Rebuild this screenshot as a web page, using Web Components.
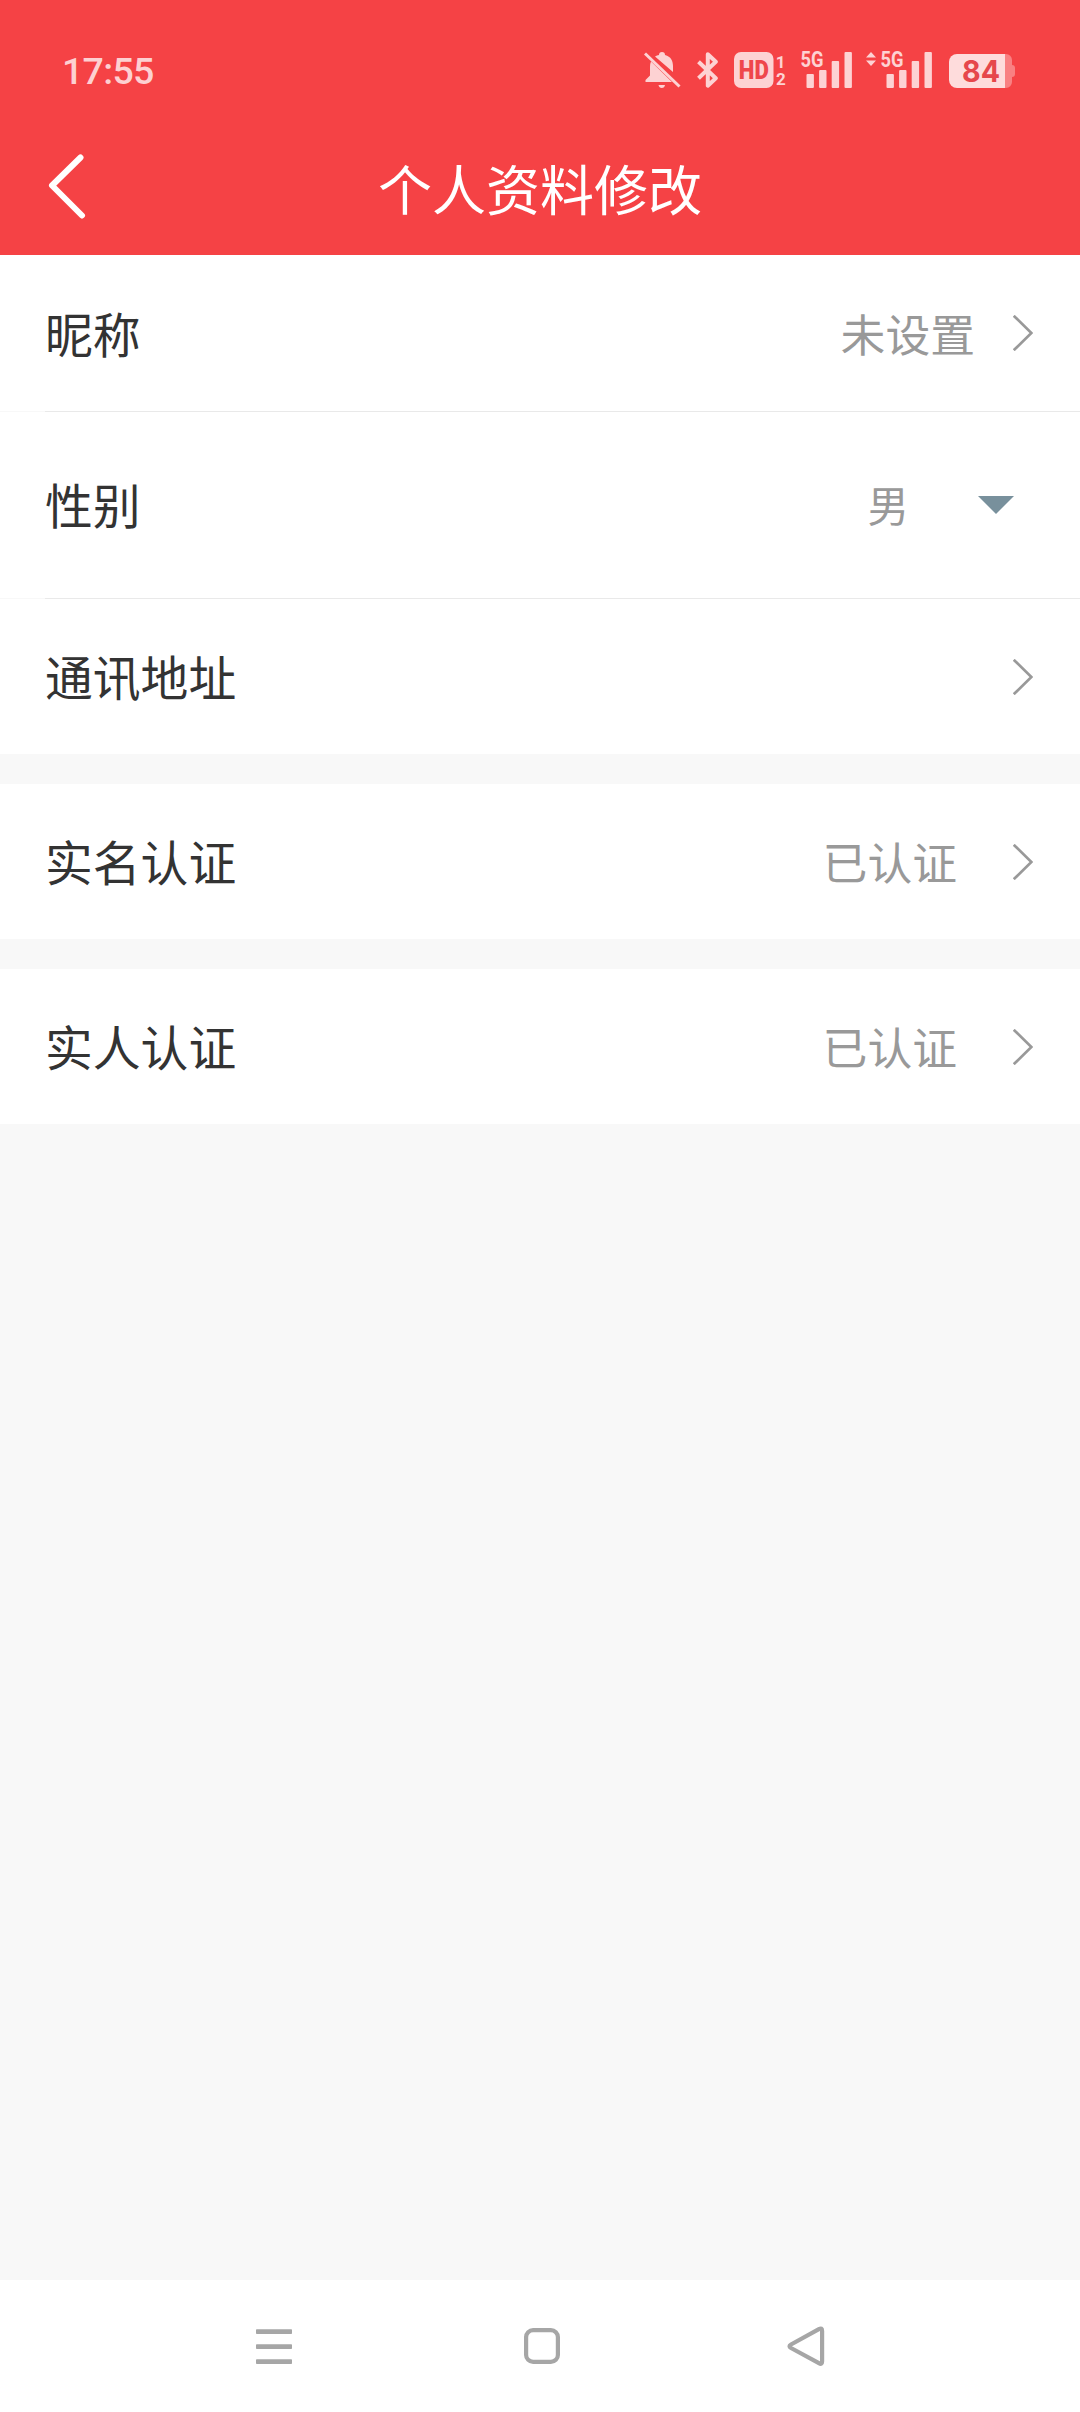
<!DOCTYPE html>
<html lang="zh-CN">
<head>
<meta charset="utf-8">
<title>个人资料修改</title>
<style>
html,body{margin:0;padding:0}
body{width:1080px;height:2412px;overflow:hidden;background:#f8f8f8;font-family:"Noto Sans CJK SC","Noto Sans",sans-serif}
</style>
</head>
<body>
<profile-page></profile-page>
<script>
const define = (name, html) => {
  const tpl = document.createElement('template');
  tpl.innerHTML = html;
  customElements.define(name, class extends HTMLElement {
    constructor() {
      super();
      this.attachShadow({ mode: 'open' }).appendChild(tpl.content.cloneNode(true));
    }
  });
};

define('signal-bars', `
<style>:host{display:block;width:52px;height:46px}svg{display:block}</style>
<svg width="52" height="46" viewBox="0 -8 52 46" fill="#fdd2d3">
  <text x="0.5" y="16.5" font-family="Roboto" font-weight="700" font-size="22" textLength="23" lengthAdjust="spacingAndGlyphs">5G</text>
  <rect x="6.5" y="24" width="7.4" height="14" rx="1"/><rect x="19.1" y="20" width="7.4" height="18" rx="1"/>
  <rect x="31.700" y="11" width="7.4" height="27" rx="1"/><rect x="44.500" y="2" width="7.4" height="36" rx="1"/>
</svg>`);

define('battery-level', `
<style>:host{display:block;width:66px;height:48px;margin-bottom:-7px}svg{display:block}</style>
<svg width="66" height="48" viewBox="0 -7 66 48">
  <path d="M56 0h1a6 6 0 0 1 6 6v5q3 0 3 3v6q0 3-3 3v5a6 6 0 0 1-6 6h-1z" fill="#f98082"/>
  <path d="M56 0H8a8 8 0 0 0-8 8v18a8 8 0 0 0 8 8h48z" fill="#fedcdc"/>
  <text x="13" y="28.300" font-family="Inter" font-weight="700" font-size="30.500" fill="#e6474b" textLength="38" lengthAdjust="spacingAndGlyphs">84</text>
</svg>`);

define('status-bar', `
<style>
:host{display:flex;box-sizing:border-box;height:112px;padding:0 65px 0 62px;justify-content:space-between;color:#fdd0d1}
time{font:500 37.5px/44px Roboto,sans-serif;margin-top:49px;letter-spacing:-.7px}
.icons{display:flex;align-items:flex-end;height:88px}
svg{display:block}
.bt{margin-left:16px}.hd{margin-left:15px}.s1{margin-left:14px}.arrows{margin:0 4px 22px 14px}.bat{margin-left:17px}
</style>
<time>17:55</time>
<div class="icons">
  <svg width="37" height="36" viewBox="0 0 37 36" fill="#fdd2d3">
    <path d="M11 4.5Q13 3.2 15 3Q15 0 18 0T21 3C27 4.500 29 9 29 14V20Z"/>
    <path d="M7 9.500L28 30H1.500V28L6 23.500V15Q6 11.500 7 9.500ZM14.500 33H21Q20.500 36 17.800 36T14.500 33Z"/>
    <path d="M1 1.500L35.500 34.500" fill="none" stroke="#fdd2d3" stroke-width="3"/>
  </svg>
  <svg class="bt" width="22" height="36" viewBox="0 0 22 36" fill="none" stroke="#fdd2d3" stroke-width="4" stroke-linejoin="round">
    <path d="M1.500 9.800L18.800 26.200L10.800 33.700V2.300L18.800 9.800L1.500 26.200"/>
  </svg>
  <svg class="hd" width="52" height="36" viewBox="0 0 52 36">
    <rect width="39.500" height="36" rx="7" fill="#fdd2d3"/>
    <text x="4.800" y="27" font-family="Roboto" font-weight="900" font-size="25.500" fill="#ef474b" textLength="30" lengthAdjust="spacingAndGlyphs">HD</text>
    <g font-family="Roboto" font-weight="700" font-size="17" fill="#fdd2d3"><text x="41.800" y="15.500">1</text><text x="42" y="33">2</text></g>
  </svg>
  <signal-bars class="s1"></signal-bars>
  <svg class="arrows" width="10" height="14" viewBox="0 0 10 14" fill="#fdd2d3"><path d="M0 5.500L5 0L10 5.500ZM0 8.500H10L5 14Z"/></svg>
  <signal-bars></signal-bars>
  <battery-level class="bat"></battery-level>
</div>`);

define('nav-header', `
<style>
:host{display:grid;grid-template-columns:160px 1fr 160px;height:143px;color:#fff}
svg{display:block;margin:41px 0 0 48px}
h1{margin:36px 0 0;font-weight:400;font-size:54px;line-height:80px;text-align:center;white-space:nowrap}
</style>
<svg width="38" height="68" viewBox="0 0 38 68" fill="none" stroke="#fff" stroke-width="6" stroke-linecap="round" stroke-linejoin="round"><path d="M32.500 4.500L4 32.500L34 62.500"/></svg>
<h1><slot></slot></h1>`);

define('chevron-icon', `
<style>:host{display:block}svg{display:block}</style>
<svg width="20" height="36" viewBox="0 0 20 36" fill="none" stroke="#999" stroke-width="2.700"><path d="M.8 .8L18.400 18L.8 35.200"/></svg>`);

define('dropdown-icon', `
<style>:host{display:block}svg{display:block}</style>
<svg width="36" height="18" viewBox="0 0 36 18"><path d="M0 0H36L18 18Z" fill="#78909c"/></svg>`);

define('setting-row', `
<style>
:host{display:flex;box-sizing:border-box;align-items:center;height:155px;padding:0 47.500px 0 45px;background:#fff;color:#333;font-size:47.800px;line-height:70px}
:host([tall]){height:186px;padding-right:66px}
.label{flex:1;padding-bottom:var(--label-lift,1px)}
.value{color:#999;font-size:44.800px;margin-right:var(--value-gap,37.500px);padding-bottom:var(--value-lift,1px)}
:host([tall]) .value{font-size:41.500px}
</style>
<span class="label"><slot></slot></span>
<span class="value"><slot name="value"></slot></span>
<slot name="icon"></slot>`);

define('row-divider', `
<style>:host{display:flex;height:1px;background:#f8f8f8;padding-left:45px}i{flex:1;background:#e9e9e9}</style><i></i>`);

define('system-nav', `
<style>
:host{display:flex;box-sizing:border-box;height:132px;background:#fff;padding:45px 253px 0 255px;justify-content:space-between;align-items:flex-start}
svg{display:block}
.home{margin-left:3px}
</style>
<svg width="38" height="42" viewBox="0 0 38 42" fill="#a6a6a6"><rect x="1" y="4.300" width="36" height="4.700" rx=".8"/><rect x="1" y="19.300" width="36" height="4.700" rx=".8"/><rect x="1" y="34.300" width="36" height="4.700" rx=".8"/></svg>
<svg class="home" width="38" height="42" viewBox="0 0 38 42" fill="none" stroke="#a6a6a6" stroke-width="4.200"><rect x="3.100" y="5.100" width="31.800" height="31.800" rx="7"/></svg>
<svg width="40" height="42" viewBox="0 0 40 42" fill="none" stroke="#a6a6a6" stroke-width="4.200" stroke-linejoin="round"><path d="M31.900 4.100Q35.100 2.300 35.100 6V36.500Q35.100 40 31.900 38.200L4 23Q1 21.200 4 19.500Z"/></svg>`);

define('profile-page', `
<style>
:host{display:flex;flex-direction:column;width:1080px;height:2412px;background:#f8f8f8}
header{background:#f54245;height:255px}
main{flex:1;display:flex;flex-direction:column;gap:30px}
.first{height:156px;--label-lift:1px;--value-lift:0px}
.wide{--value-gap:55.500px}
.gender{--label-lift:3px;--value-gap:69px;--value-lift:2px}
</style>
<header><status-bar></status-bar><nav-header>个人资料修改</nav-header></header>
<main>
  <section>
    <setting-row class="first">昵称<span slot="value">未设置</span><chevron-icon slot="icon"></chevron-icon></setting-row>
    <row-divider></row-divider>
    <setting-row tall class="gender">性别<span slot="value">男</span><dropdown-icon slot="icon"></dropdown-icon></setting-row>
    <row-divider></row-divider>
    <setting-row>通讯地址<chevron-icon slot="icon"></chevron-icon></setting-row>
  </section>
  <section><setting-row class="wide">实名认证<span slot="value">已认证</span><chevron-icon slot="icon"></chevron-icon></setting-row></section>
  <section><setting-row class="wide">实人认证<span slot="value">已认证</span><chevron-icon slot="icon"></chevron-icon></setting-row></section>
</main>
<system-nav></system-nav>`);
</script>
</body>
</html>
